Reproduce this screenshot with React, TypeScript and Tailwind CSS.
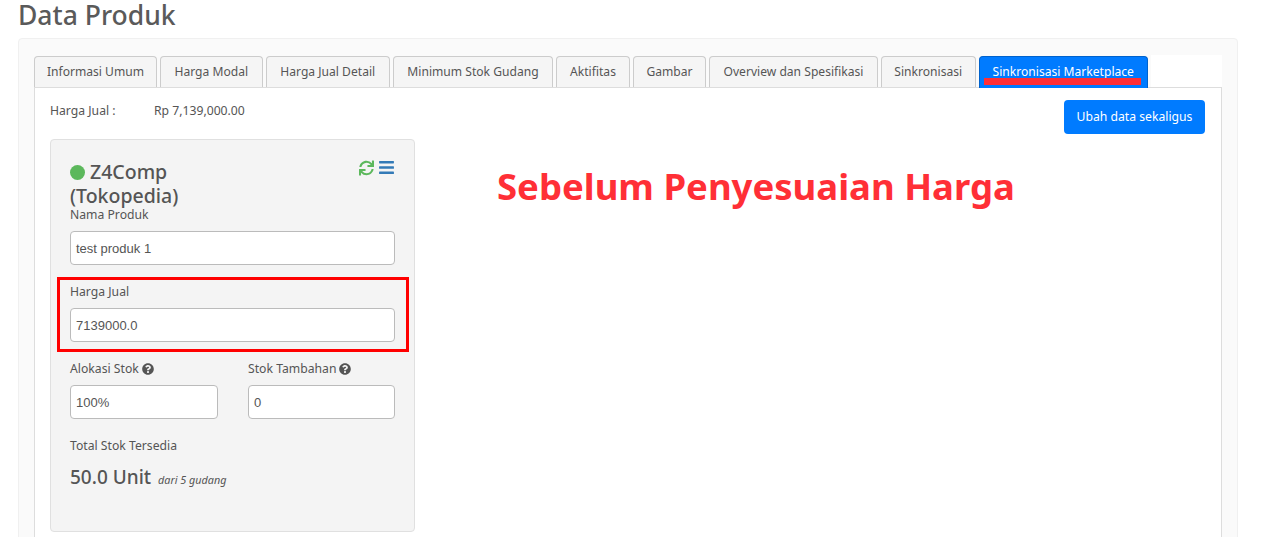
import React from 'react'
import { FaBars, FaQuestionCircle, FaSync } from 'react-icons/fa'

const tabs = [
    { label: 'Informasi Umum', width: 'w-[123px]' },
    { label: 'Harga Modal', width: 'w-[102.5px]' },
    { label: 'Harga Jual Detail', width: 'w-[124.5px]' },
    { label: 'Minimum Stok Gudang', width: 'w-[160px]' },
    { label: 'Aktifitas', width: 'w-[74px]' },
    { label: 'Gambar', width: 'w-[73px]' },
    { label: 'Overview dan Spesifikasi', width: 'w-[169px]' },
    { label: 'Sinkronisasi', width: 'w-[94.5px]' },
]

const Field = ({ value }: { value: string }) => (
    <div className="h-[34px] bg-white border border-[#bbb] rounded-[4px] px-[5px] pt-[1px] flex items-center text-[13px] text-[#555] font-['Liberation_Sans',sans-serif]">
        {value}
    </div>
)

const App = () => {
    return (
        <div className="h-[537px] overflow-hidden bg-white font-['Noto_Sans',sans-serif] text-[#555] text-[12.2px]">
            <h1 className="h-[38px] pl-[18px] text-[26.5px] leading-[30px] font-medium text-[#5a5a5a]">Data Produk</h1>

            <div className="ml-[18px] w-[1220px] h-[600px] bg-[#fafafa] border border-[#f0f0f0] rounded-[4px] pt-[15px] px-[15px]">
                <div className="bg-white">
                    <div className="flex gap-[3px] h-[33px] pt-[2px] relative z-10 bg-[#fafafa]">
                        {tabs.map((tab) => (
                            <div key={tab.label} className={`${tab.width} h-[31px] flex items-center justify-center whitespace-nowrap bg-[#f5f5f5] border border-[#ccc] border-b-0 rounded-t-[4px] text-[12.1px] text-[#555]`}>
                                {tab.label}
                            </div>
                        ))}
                        <div className="relative w-[169.5px] h-[32px] pb-[1px] flex items-center justify-center whitespace-nowrap bg-[#007bff] border border-[#0062cc] border-b-0 rounded-t-[4px] text-[12.1px] text-white">
                            Sinkronisasi Marketplace
                            <div className="absolute left-[4.5px] bottom-[3px] w-[157px] h-[7px] bg-[#ff2f36]" />
                        </div>
                        <div className="flex-1 bg-white -mt-[1px]" />
                    </div>

                    <div className="relative h-[500px] border border-[#ddd] bg-white pl-[15px] pr-[16px]">
                        <div className="flex justify-between">
                            <div className="flex pt-[14px] leading-[17px]">
                                <span className="w-[104px]">Harga Jual :</span>
                                <span>Rp 7,139,000.00</span>
                            </div>
                            <button className="mt-[12px] w-[141px] h-[34px] bg-[#007bff] text-white rounded-[4px] text-[12.2px]">
                                Ubah data sekaligus
                            </button>
                        </div>

                        <div className="relative w-[365px] h-[393px] mt-[5px] bg-[#f4f4f4] border border-[#e0e0e0] rounded-[4px] px-[19px] pt-[20px]">
                            <div className="flex justify-between items-start">
                                <h3 className="w-[150px] text-[19.5px] leading-[24px] font-medium text-[#555]">
                                    <span className="inline-block w-[15px] h-[15px] rounded-full bg-[#5cb85c] mr-[5px] align-[-1px]" />
                                    Z4Comp (Tokopedia)
                                </h3>
                                <div className="flex gap-[5px] items-center mr-[1px] -mt-[1px]">
                                    <FaSync className="w-[15px] h-[16px] text-[#5cb85c]" />
                                    <FaBars className="w-[15px] h-[17px] text-[#337ab7]" />
                                </div>
                            </div>

                            <label className="block mt-[-2px] mb-[8px] leading-[17px]">Nama Produk</label>
                            <Field value="test produk 1" />

                            <label className="block mt-[18px] mb-[8px] leading-[17px]">Harga Jual</label>
                            <Field value="7139000.0" />

                            <div className="grid grid-cols-[148px_147px] gap-x-[30px] mt-[18px]">
                                <div>
                                    <label className="flex items-center gap-[3px] mb-[8px] leading-[17px]">
                                        Alokasi Stok <FaQuestionCircle className="w-3 h-3" />
                                    </label>
                                    <Field value="100%" />
                                </div>
                                <div>
                                    <label className="flex items-center gap-[3px] mb-[8px] leading-[17px]">
                                        Stok Tambahan <FaQuestionCircle className="w-3 h-3" />
                                    </label>
                                    <Field value="0" />
                                </div>
                            </div>

                            <label className="block mt-[18px] leading-[17px]">Total Stok Tersedia</label>
                            <div className="mt-[11px] flex items-baseline gap-[7px]">
                                <span className="text-[19px] leading-[25px] font-medium">50.0 Unit</span>
                                <em className="text-[10.8px]">dari 5 gudang</em>
                            </div>

                            <div className="absolute left-[6px] top-[137px] w-[352px] h-[75px] border-[3px] border-[#f00]" />
                        </div>

                        <div className="absolute left-[462px] top-[73px] text-[36.5px] leading-[50px] font-bold text-[#ff2f36] whitespace-nowrap">
                            Sebelum Penyesuaian Harga
                        </div>
                    </div>
                </div>
            </div>
        </div>
    )
}

export default App
